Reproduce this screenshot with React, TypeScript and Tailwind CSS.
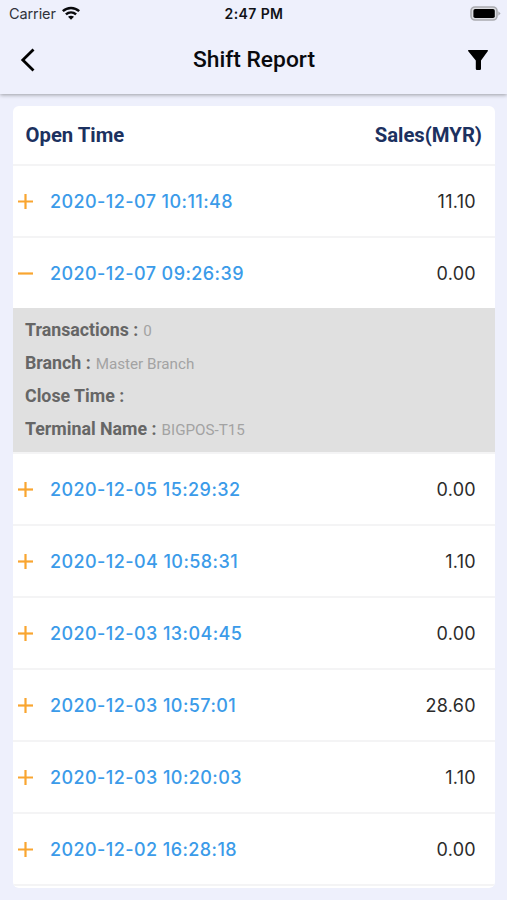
import React, { useState } from 'react';

interface Shift {
  id: number;
  openTime: string;
  sales: string;
  transactions: number;
  branch: string;
  closeTime: string;
  terminal: string;
}

const createShift = (id: number, openTime: string, sales: string): Shift => ({
  id,
  openTime,
  sales,
  transactions: 0,
  branch: 'Master Branch',
  closeTime: '',
  terminal: 'BIGPOS-T15',
});

const shifts: Shift[] = [
  createShift(1, '2020-12-07 10:11:48', '11.10'),
  createShift(2, '2020-12-07 09:26:39', '0.00'),
  createShift(3, '2020-12-05 15:29:32', '0.00'),
  createShift(4, '2020-12-04 10:58:31', '1.10'),
  createShift(5, '2020-12-03 13:04:45', '0.00'),
  createShift(6, '2020-12-03 10:57:01', '28.60'),
  createShift(7, '2020-12-03 10:20:03', '1.10'),
  createShift(8, '2020-12-02 16:28:18', '0.00'),
];

const StatusBar: React.FC = () => (
  <div className="grid h-7 grid-cols-[1fr_auto_1fr] items-center pl-[9px] pr-[6px] font-['Inter',sans-serif] text-[#111217]">
    <div className="flex items-center gap-[6px]">
      <span className="text-[14.5px] leading-7 tracking-[-0.1px] text-[#30323a]">Carrier</span>
      <svg className="-mt-[2px] h-[14px] w-[18px]" viewBox="0 0 18 14" fill="none" stroke="#08090c" strokeWidth="2.5">
        <path d="M.8 5.2C5.4.8 12.6.8 17.2 5.2" />
        <path d="M3.9 8.4C6.9 5.7 11.1 5.7 14.1 8.4" />
        <path d="M9 13.7 6 10.8C7.7 9.3 10.3 9.3 12 10.8Z" fill="#08090c" stroke="none" />
      </svg>
    </div>
    <span className="-ml-[2px] text-center text-[14px] font-semibold leading-7 tracking-[0.4px]">2:47 PM</span>
    <svg className="-mt-[2px] h-[15px] w-[31px] justify-self-end" viewBox="0 0 31 15">
      <rect x="1" y="1" width="26" height="13" rx="4" fill="#dcdde2" stroke="#aaabb0" strokeWidth="1.6" />
      <rect x="3.4" y="3" width="21.4" height="9" rx="1.8" fill="#000" />
      <path d="M28.3 5.3 30.6 7.5 28.3 9.7Z" fill="#aaabb0" />
    </svg>
  </div>
);

const Header: React.FC = () => (
  <header className="relative h-[94px] bg-[#eef0fc] shadow-[0_1px_4px_rgba(0,0,0,0.35)]">
    <StatusBar />
    <div className="flex h-[63px] items-center justify-between pl-[20px] pr-[19px]">
      <button type="button" aria-label="Back" className="w-5">
        <svg className="h-6 w-[15px]" viewBox="0 0 15 24" fill="none" stroke="#000" strokeWidth="2.8">
          <path d="M13.5 1.4 2.8 12 13.5 22.6" />
        </svg>
      </button>
      <h1 className="font-['Roboto',sans-serif] text-[22.8px] font-medium leading-7 text-[#090a0e]">
        Shift Report
      </h1>
      <button type="button" aria-label="Filter" className="w-5">
        <svg className="h-5 w-5" viewBox="0 0 20 20" fill="#000">
          <path d="M.7 0H19.3Q20.2 0 19.9 1L13 10.6V18.8Q13 20 11.8 20H9Q7.8 20 7.8 18.8V10.6L.1 1Q-.2 0 .7 0Z" />
        </svg>
      </button>
    </div>
  </header>
);

const DetailLine: React.FC<{ label: string; value: string | number }> = ({ label, value }) => (
  <div className="flex h-[33px] items-baseline gap-[5px] leading-[33px]">
    <span className="text-[17.8px] font-bold text-[#666]">{label} :</span>
    <span className="text-[15.2px] text-[#a3a3a3]">{value}</span>
  </div>
);

const ShiftRow: React.FC<{ shift: Shift; open: boolean; onToggle: () => void }> = ({
  shift,
  open,
  onToggle,
}) => (
  <div>
    <button
      type="button"
      onClick={onToggle}
      className={`flex w-full items-center pl-[5px] pr-[19px] font-['Inter',sans-serif] text-[18px] ${
        open ? 'h-[70px]' : 'h-[72px] border-b-2 border-[#f4f4f5]'
      }`}
    >
      <svg className="h-[15px] w-[15px]" viewBox="0 0 15 15" stroke="#f9a530" strokeWidth="2.2">
        <path d="M0 7.5H15" />
        {!open && <path d="M7.5 0V15" />}
      </svg>
      <span className="ml-[17px] font-medium tracking-[0.42px] text-[#3b9be9]">{shift.openTime}</span>
      <span className="ml-auto tracking-[0.3px] text-[#2b2b2b]">{shift.sales}</span>
    </button>
    {open && (
      <div className="h-[146px] border-b-2 border-[#f4f4f5] bg-[#e0e0e0] px-[12px] pt-[5px] font-['Roboto',sans-serif]">
        <DetailLine label="Transactions" value={shift.transactions} />
        <DetailLine label="Branch" value={shift.branch} />
        <DetailLine label="Close Time" value={shift.closeTime} />
        <DetailLine label="Terminal Name" value={shift.terminal} />
      </div>
    )}
  </div>
);

export default function App() {
  const [openId, setOpenId] = useState<number | null>(2);

  return (
    <div className="h-[900px] w-full overflow-hidden bg-[#eef0fc]">
      <Header />
      <main className="ml-[13px] mr-[12px] mt-[12px] overflow-hidden rounded-[6px] bg-white pb-[2px]">
        <div className="flex h-[60px] items-center justify-between border-b-2 border-[#f4f4f5] pl-[12.5px] pr-[13px] font-['Roboto',sans-serif] text-[20.3px] font-bold text-[#1c3160]">
          <span>Open Time</span>
          <span>Sales(MYR)</span>
        </div>
        {shifts.map((shift) => (
          <ShiftRow
            key={shift.id}
            shift={shift}
            open={openId === shift.id}
            onToggle={() => setOpenId(openId === shift.id ? null : shift.id)}
          />
        ))}
      </main>
    </div>
  );
}
